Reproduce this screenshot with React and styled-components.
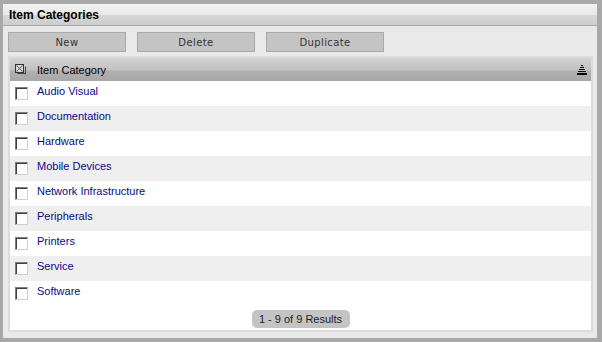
import React from "react";
import styled, { createGlobalStyle } from "styled-components";

const categories = [
  "Audio Visual",
  "Documentation",
  "Hardware",
  "Mobile Devices",
  "Network Infrastructure",
  "Peripherals",
  "Printers",
  "Service",
  "Software",
];

const GlobalStyle = createGlobalStyle`
  html, body {
    margin: 0;
    padding: 0;
    background: #ffffff;
  }
`;

const Frame = styled.div`
  box-sizing: border-box;
  width: 602px;
  height: 342px;
  border-style: solid;
  border-color: #a8a8a8;
  border-width: 4px 5px 4px 3px;
  background: #e9e9e9;
  display: flex;
  flex-direction: column;
  font-family: "Liberation Sans", Arial, sans-serif;
`;

const TitleBar = styled.div`
  height: 21px;
  border-bottom: 1px solid #a8a8a8;
  background: linear-gradient(#f3f3f3 0%, #e8e8e8 52%, #d6d6d6 54%, #cdcdcd 100%);
  display: flex;
  align-items: center;
  padding-left: 6px;
  font-size: 12px;
  font-weight: bold;
  color: #000;
`;

const Toolbar = styled.div`
  display: flex;
  gap: 11px;
  padding: 6px 5px 4px;
`;

const Button = styled.button`
  width: 118px;
  height: 20px;
  margin: 0;
  padding: 0;
  background: #c4c4c4;
  border: 1px solid #a9a9a9;
  color: #333;
  font-family: "DejaVu Sans", Verdana, sans-serif;
  font-size: 10px;
  letter-spacing: 0.4px;
  cursor: pointer;
`;

const Grid = styled.div`
  margin: 0 4px 0 5px;
  border: 2px solid #dcdcdc;
  background: #fff;
  display: flex;
  flex-direction: column;
`;

const Header = styled.div`
  height: 23px;
  display: flex;
  align-items: center;
  padding: 0 4px 0 5px;
  background: linear-gradient(#d2d2d2 0%, #c2c2c2 50%, #b0b0b0 58%, #a8a8a8 100%);
  font-size: 11px;
  color: #000;

  span {
    flex: 1;
    margin-left: 11px;
  }
`;

const Row = styled.div`
  height: 25px;
  box-sizing: border-box;
  display: flex;
  align-items: flex-start;
  padding: 4px 0 0 5px;
  background: ${(p) => (p.$alt ? "#efefef" : "#ffffff")};
`;

const Check = styled.span`
  box-sizing: border-box;
  width: 13px;
  height: 13px;
  margin-top: 2px;
  border: 1px solid;
  border-color: #7c7c7c #d4d0c8 #d4d0c8 #7c7c7c;
  box-shadow: inset 1px 1px 0 #404040;
  background: #fff;
`;

const Label = styled.a`
  margin-left: 9px;
  font-size: 11px;
  line-height: 13px;
  color: #0a0a86;
  text-decoration: none;
`;

const Footer = styled.div`
  height: 24px;
  display: flex;
  justify-content: center;
  padding-top: 4px;
  box-sizing: border-box;
`;

const Pager = styled.div`
  width: 98px;
  height: 18px;
  border-radius: 5px;
  background: #c4c4c4;
  display: flex;
  align-items: center;
  justify-content: center;
  font-size: 11px;
  color: #222;
`;

const SelectAllIcon = () => (
  <svg width="11" height="11" viewBox="0 0 11 11">
    <path d="M2.5 9.5h8M10.5 2.5v8" stroke="#444" strokeWidth="1" fill="none" />
    <rect x="0.5" y="0.5" width="8" height="8" fill="#d8d8d8" stroke="#333" />
    <path d="M1.5 1.5l6 6M7.5 1.5l-6 6" stroke="#555" strokeWidth="1" />
  </svg>
);

const SortIcon = () => (
  <svg width="10" height="10" viewBox="0 0 10 10">
    <rect x="4" y="0" width="2" height="1" fill="#000" />
    <rect x="3" y="2" width="4" height="1" fill="#000" />
    <rect x="2" y="4" width="6" height="1" fill="#000" />
    <rect x="1" y="6" width="8" height="1" fill="#000" />
    <rect x="0" y="8" width="10" height="2" fill="#000" />
  </svg>
);

export default function App() {
  return (
    <>
      <GlobalStyle />
      <Frame>
        <TitleBar>Item Categories</TitleBar>
        <Toolbar>
          <Button>New</Button>
          <Button>Delete</Button>
          <Button>Duplicate</Button>
        </Toolbar>
        <Grid>
          <Header>
            <SelectAllIcon />
            <span>Item Category</span>
            <SortIcon />
          </Header>
          {categories.map((name, i) => (
            <Row key={name} $alt={i % 2 === 1}>
              <Check />
              <Label href="#">{name}</Label>
            </Row>
          ))}
          <Footer>
            <Pager>1 - 9 of 9 Results</Pager>
          </Footer>
        </Grid>
      </Frame>
    </>
  );
}
